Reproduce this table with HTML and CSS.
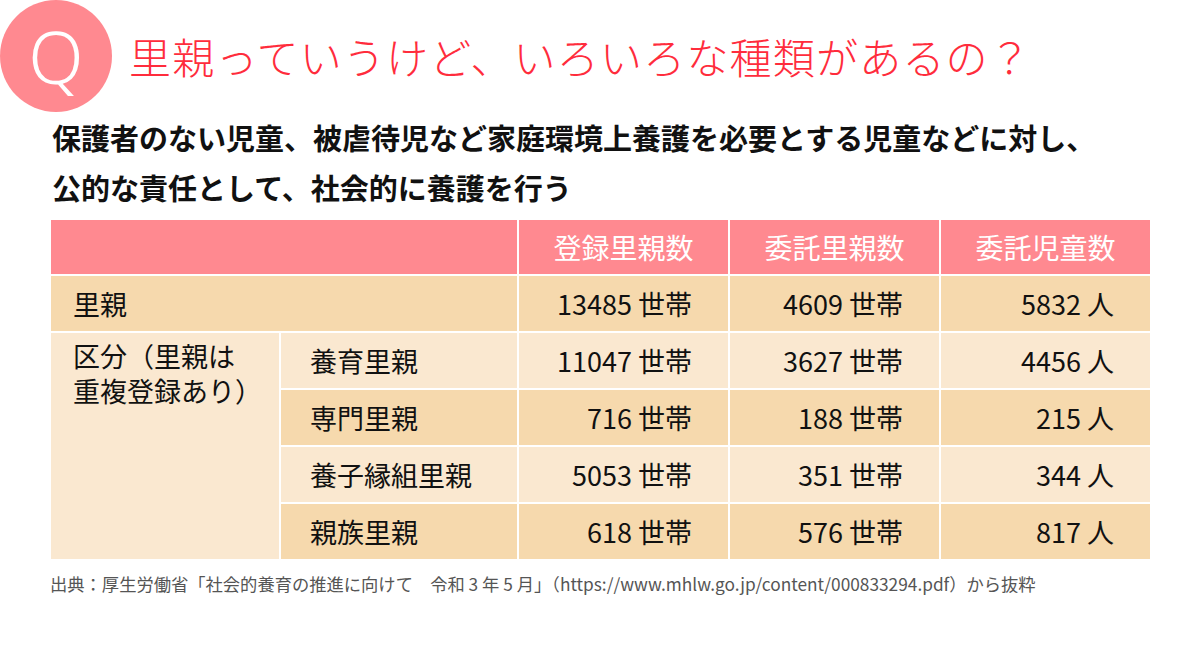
FILE: index.html
```html
<!DOCTYPE html>
<html lang="ja">
<head>
<meta charset="utf-8">
<title>里親</title>
<link rel="stylesheet" href="styles.css">
</head>
<body>
<header class="hero">
  <div class="q-badge">Q</div>
  <h1 class="title">里親っていうけど、いろいろな種類があるの？</h1>
</header>
<p class="lead">保護者のない児童、被虐待児など家庭環境上養護を必要とする児童などに対し、<br>公的な責任として、社会的に養護を行う</p>
<div class="table">
  <div class="cell head span2"></div>
  <div class="cell head">登録里親数</div>
  <div class="cell head">委託里親数</div>
  <div class="cell head">委託児童数</div>

  <div class="cell dark label span2">里親</div>
  <div class="cell dark num">13485 世帯</div>
  <div class="cell dark num">4609 世帯</div>
  <div class="cell dark num">5832 人</div>

  <div class="cell light label group"><span class="gline">区分（里親は</span><span class="gline">重複登録あり）</span></div>
  <div class="cell light sub">養育里親</div>
  <div class="cell light num">11047 世帯</div>
  <div class="cell light num">3627 世帯</div>
  <div class="cell light num">4456 人</div>

  <div class="cell dark sub">専門里親</div>
  <div class="cell dark num">716 世帯</div>
  <div class="cell dark num">188 世帯</div>
  <div class="cell dark num">215 人</div>

  <div class="cell light sub">養子縁組里親</div>
  <div class="cell light num">5053 世帯</div>
  <div class="cell light num">351 世帯</div>
  <div class="cell light num">344 人</div>

  <div class="cell dark sub">親族里親</div>
  <div class="cell dark num">618 世帯</div>
  <div class="cell dark num">576 世帯</div>
  <div class="cell dark num">817 人</div>
</div>
<p class="source">出典：厚生労働省「社会的養育の推進に向けて　令和 3 年 5 月」（https://www.mhlw.go.jp/content/000833294.pdf）から抜粋</p>
</body>
</html>
```
FILE: styles.css
```css
html, body {
  margin: 0;
  padding: 0;
  background: #ffffff;
}
body {
  width: 1200px;
  height: 650px;
  overflow: hidden;
  font-family: "Noto Sans CJK JP", "Noto Sans", sans-serif;
  color: #111111;
}
.hero {
  display: flex;
  align-items: center;
  height: 112px;
}
.q-badge {
  width: 112px;
  height: 112px;
  flex: none;
  border-radius: 50%;
  background: #ff8990;
  color: #ffffff;
  font-family: "Noto Sans", sans-serif;
  font-weight: 300;
  font-size: 72px;
  line-height: 112px;
  text-align: center;
}
.title {
  margin: 0 0 0 17px;
  font-size: 42px;
  font-weight: 300;
  color: #ff2c3c;
  letter-spacing: 1.2px;
  line-height: 1;
  white-space: nowrap;
}
.lead {
  margin: 0 0 0 52px;
  font-size: 29px;
  font-weight: 700;
  line-height: 50px;
  color: #111111;
  white-space: nowrap;
}
.table {
  margin: 8px 0 0 51px;
  width: 1099px;
  display: grid;
  grid-template-columns: 228px 236px 209px 209px 209px;
  grid-template-rows: 54px repeat(5, 55px);
  gap: 2px;
  font-size: 27px;
}
.cell {
  display: flex;
  align-items: center;
  line-height: 35px;
}
.span2 {
  grid-column: span 2;
}
.head {
  background: #ff8990;
  color: #ffffff;
  justify-content: center;
  font-size: 28px;
}
.dark {
  background: #f6d9ad;
}
.light {
  background: #fae8d0;
}
.label {
  padding-left: 22px;
}
.group {
  grid-row: span 4;
  flex-direction: column;
  align-items: flex-start;
  justify-content: flex-start;
  gap: 0;
  padding-top: 5px;
}
.gline {
  display: block;
  line-height: 35px;
  height: 35px;
}
.sub {
  padding-left: 29px;
}
.num {
  justify-content: flex-end;
  padding-right: 36px;
}
.source {
  margin: 13px 0 0 50px;
  font-size: 17.3px;
  line-height: 24px;
  color: #555555;
  white-space: nowrap;
}
```
